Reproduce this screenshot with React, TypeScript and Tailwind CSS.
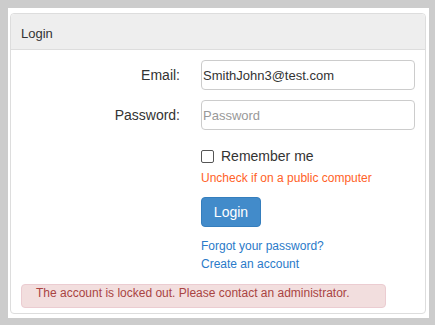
import React from "react";

export default function App() {
  const font = { fontFamily: '"Liberation Sans", Arial, sans-serif' };
  return (
    <div className="w-[435px] h-[325px] bg-[#cccccc] pt-[8px] pl-[8px]" style={font}>
      <div className="w-[421px] h-[310px] bg-white pt-[5px] pl-[2px]">
        <div className="w-[416px] h-[301px] border border-[#dddddd] rounded-[4px] flex flex-col">
          <div className="h-[36px] bg-[#eeeeee] border-b border-[#dddddd] rounded-t-[4px] pl-[10px] pt-[4px] flex items-center text-[13px] text-[#333333]">
            Login
          </div>
          <div className="flex flex-col pt-[10px]">
            <div className="flex items-center h-[30px]">
              <div className="w-[169px] text-right text-[14px] text-[#333333]">Email:</div>
              <input
                className="ml-[21px] w-[214px] h-[30px] border border-[#cccccc] rounded-[4px] px-[1px] text-[13px] text-[#333333] outline-none"
                style={font}
                defaultValue="SmithJohn3@test.com"
              />
            </div>
            <div className="flex items-center h-[30px] mt-[10px]">
              <div className="w-[169px] text-right text-[14px] text-[#333333]">Password:</div>
              <input
                type="password"
                placeholder="Password"
                className="ml-[21px] w-[214px] h-[30px] border border-[#cccccc] rounded-[4px] px-[1px] text-[13px] text-[#333333] placeholder:text-[#999999] outline-none"
                style={font}
              />
            </div>
            <div className="pl-[190px] flex flex-col">
              <div className="flex items-center mt-[18px] h-[16px]">
                <div className="w-[13px] h-[13px] border border-[#555555] rounded-[2px] bg-white" />
                <span className="ml-[7px] text-[14px] text-[#333333]">Remember me</span>
              </div>
              <div className="mt-[6px] h-[16px] flex items-center text-[12px] text-[#ff6227]">
                Uncheck if on a public computer
              </div>
              <div className="mt-[11px]">
                <button
                  className="w-[60px] h-[30px] bg-[#428bca] border border-[#357ebd] rounded-[4px] text-white text-[14px] flex items-center justify-center"
                  style={font}
                >
                  Login
                </button>
              </div>
              <div className="mt-[10px] h-[18px] flex items-center text-[12px] text-[#2a7ac9]">
                Forgot your password?
              </div>
              <div className="h-[18px] flex items-center text-[12px] text-[#2a7ac9]">
                Create an account
              </div>
            </div>
            <div className="ml-[10px] mt-[11px] w-[365px] h-[24px] bg-[#f2dede] border border-[#ebccd1] rounded-[4px] pl-[14px] text-[12px] leading-[16px] text-[#a94442]">
              The account is locked out. Please contact an administrator.
            </div>
          </div>
        </div>
      </div>
    </div>
  );
}
